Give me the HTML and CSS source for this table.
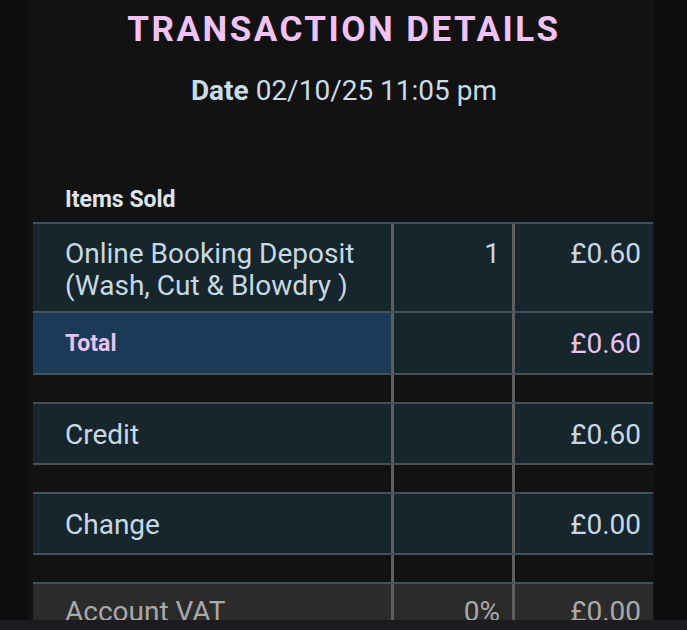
FILE: index.html
```html
<!DOCTYPE html>
<html lang="en">
  <head>
    <meta charset="UTF-8" />
    <title>Transaction Details</title>
    <link rel="stylesheet" href="styles.css">
  </head>
  <body>
    <div class="screen">
      <main class="panel">
        <h1>TRANSACTION DETAILS</h1>
        <p class="date"><b>Date</b> 02/10/25 11:05 pm</p>

        <h2>Items Sold</h2>

        <!-- Items -->
        <div class="sheet">
          <div class="row item">
            <div class="cell">Online Booking Deposit<br>(Wash, Cut &amp; Blowdry )</div>
            <div class="cell num">1</div>
            <div class="cell num">£0.60</div>
          </div>
          <div class="row total">
            <div class="cell label">Total</div>
            <div class="cell num"></div>
            <div class="cell num">£0.60</div>
          </div>
          <div class="row gap"><div class="cell"></div><div class="cell"></div><div class="cell"></div></div>

          <div class="row single">
            <div class="cell">Credit</div>
            <div class="cell num"></div>
            <div class="cell num">£0.60</div>
          </div>
          <div class="row gap"><div class="cell"></div><div class="cell"></div><div class="cell"></div></div>

          <div class="row single">
            <div class="cell">Change</div>
            <div class="cell num"></div>
            <div class="cell num">£0.00</div>
          </div>
          <div class="row gap"><div class="cell"></div><div class="cell"></div><div class="cell"></div></div>

          <div class="row vat">
            <div class="cell">Account VAT</div>
            <div class="cell num">0%</div>
            <div class="cell num">£0.00</div>
          </div>
        </div>
      </main>
      <div class="navbar"></div>
    </div>
  </body>
</html>
```

FILE: styles.css
```css
body {
  margin: 0;
  background-color: #0c0c0e;
  font-family: Roboto, "Liberation Sans", sans-serif;
  color: #c6d9e3;
}

.screen {
  display: flex;
  flex-direction: column;
  height: 630px;
}

.panel {
  height: 620px;
  overflow: hidden;
  margin: 0 32px 0 28px;
  padding: 0 0 0 5px;
  background-color: #121212;
}

h1 {
  margin: 0;
  padding-top: 10px;
  text-align: center;
  font-size: 35px;
  line-height: 40px;
  font-weight: 700;
  letter-spacing: 2.5px;
  color: #f0c3f7;
}

.date {
  margin: 25px 0 0;
  text-align: center;
  font-size: 28px;
  line-height: 32px;
  color: #c9dce6;
}

h2 {
  margin: 80px 0 0 32px;
  font-size: 23px;
  line-height: 26px;
  font-weight: 700;
  color: #dfe6ea;
}

.sheet {
  margin-top: 9px;
  width: 620px;
}

.row {
  display: grid;
  grid-template-columns: 358px 121px 141px;
  border-top: 2px solid #46525a;
  font-size: 28px;
  line-height: 32px;
}

.row .cell {
  box-sizing: border-box;
  padding: 14px 12px 12px 32px;
  background-color: #17252d;
}

.row .cell + .cell {
  border-left: 3px solid #5c5e60;
}

.num {
  text-align: right;
}

.item .cell {
  padding-bottom: 9px;
}

.total .cell {
  padding-top: 15px;
  padding-bottom: 13px;
  color: #e8c2f1;
}

.total .cell.label {
  background-color: #1b3a57;
  font-size: 23px;
  font-weight: 700;
}

.total,
.single {
  border-bottom: 2px solid #46525a;
}

.single .cell {
  padding-top: 15px;
  padding-bottom: 12px;
}

.gap {
  border-top: none;
  height: 27px;
}

.gap .cell {
  background-color: transparent;
  padding: 0;
}

.vat .cell {
  padding-top: 12px;
  background-color: #2b2b2b;
  color: #a9a9a9;
}

.navbar {
  height: 10px;
  background-color: #1c1c20;
}
```
